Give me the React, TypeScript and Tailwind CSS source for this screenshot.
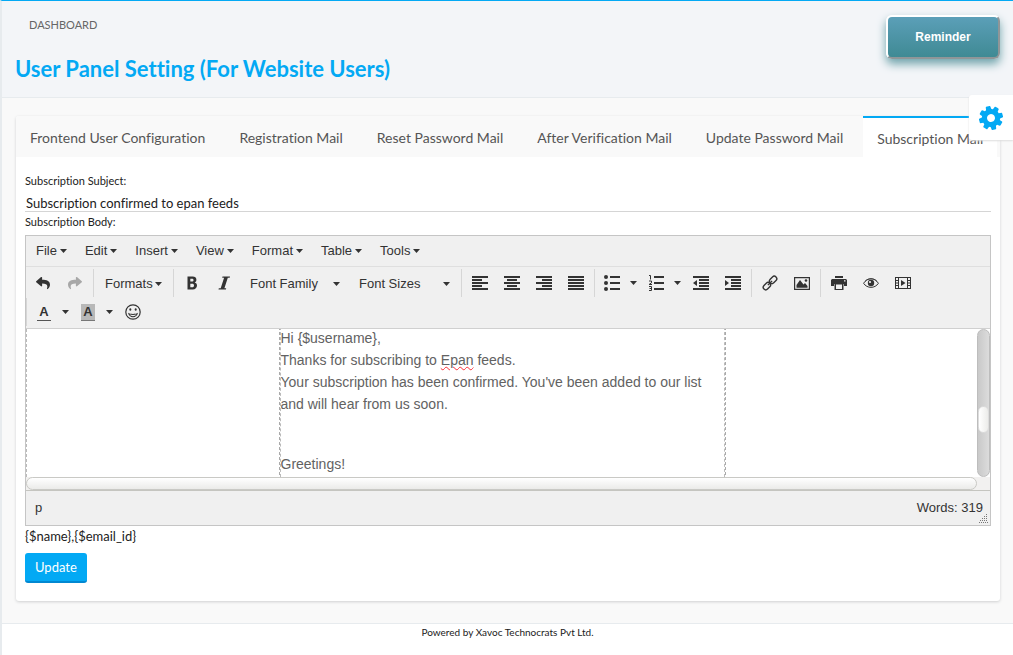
import type { ReactNode } from "react";
import { FaReply, FaShare } from "react-icons/fa";

const TABS = [
  "Frontend User Configuration",
  "Registration Mail",
  "Reset Password Mail",
  "After Verification Mail",
  "Update Password Mail",
  "Subscription Mail",
];

const MENUS = ["File", "Edit", "Insert", "View", "Format", "Table", "Tools"];

function Caret() {
  return (
    <svg viewBox="0 0 7 4" className="h-1 w-[7px] shrink-0 fill-[#333]" aria-hidden="true">
      <path d="M0 0h7L3.5 4z" />
    </svg>
  );
}

function Icon({ children }: { children: ReactNode }) {
  return (
    <svg viewBox="0 0 16 16" className="size-4 shrink-0 fill-[#333]" aria-hidden="true">
      {children}
    </svg>
  );
}

function Tool({ label, children }: { label: string; children: ReactNode }) {
  return (
    <button type="button" aria-label={label} className="flex h-7 w-8 items-center justify-center">
      {children}
    </button>
  );
}

function SplitTool({ label, children }: { label: string; children: ReactNode }) {
  return (
    <div className="flex h-7 w-11 items-center pl-[7px]">
      <button type="button" aria-label={label} className="flex h-7 w-4 items-center justify-center">
        {children}
      </button>
      <button type="button" aria-label={`${label} options`} className="flex h-7 w-5 items-center justify-end pr-[3px]">
        <Caret />
      </button>
    </div>
  );
}

function Group({ first, children }: { first?: boolean; children: ReactNode }) {
  return (
    <div className={first ? "flex pr-[2px] pl-px" : "flex border-l border-[#d6d6d6] pr-[2px] pl-[2px]"}>
      {children}
    </div>
  );
}

function Toolbar() {
  return (
    <div role="toolbar" aria-label="Formatting" className="flex flex-wrap gap-y-px border-b border-[#d0d0d0] py-[2px]">
      <Group first>
        <Tool label="Undo">
          <FaReply className="size-[14px] text-[#333]" />
        </Tool>
        <Tool label="Redo">
          <FaShare className="size-[14px] text-[#a7a7a7]" />
        </Tool>
      </Group>
      <Group>
        <button type="button" className="flex h-7 w-[75px] items-center justify-between px-[9px] pt-px">
          Formats <Caret />
        </button>
      </Group>
      <Group>
        <Tool label="Bold">
          <Icon>
            <path
              fillRule="evenodd"
              d="M3.500 1.500h5.200c2.200 0 3.700 1.200 3.700 3.200 0 1.300-.6 2.300-1.700 2.800 1.500.4 2.300 1.500 2.300 3.100 0 2.400-1.700 3.900-4.200 3.900H3.500zM6.300 3.700v2.900h1.600c1 0 1.600-.5 1.600-1.450S8.900 3.700 7.900 3.700zM6.300 8.700v3.500h1.900c1.200 0 1.800-.6 1.800-1.750S9.400 8.700 8.200 8.700z"
            />
          </Icon>
        </Tool>
        <Tool label="Italic">
          <Icon>
            <path d="M6.500 1.500H14l-.3 1.300h-1.900L8.400 13.200h1.800l-.3 1.300H2.500l.3-1.300h1.900L8.100 2.800H6.200z" />
          </Icon>
        </Tool>
        <button type="button" className="flex h-7 w-[109px] items-center justify-between pt-px pr-[9px] pl-[10px]">
          Font Family <Caret />
        </button>
        <button type="button" className="flex h-7 w-[110px] items-center justify-between pt-px pr-[9px] pl-[10px]">
          Font Sizes <Caret />
        </button>
      </Group>
      <Group>
        <Tool label="Align left">
          <Icon>
            <path d="M0 1h16v2H0zM0 4h10v2H0zM0 7h16v2H0zM0 10h10v2H0zM0 13h16v2H0z" />
          </Icon>
        </Tool>
        <Tool label="Align center">
          <Icon>
            <path d="M0 1h16v2H0zM3 4h10v2H3zM0 7h16v2H0zM3 10h10v2H3zM0 13h16v2H0z" />
          </Icon>
        </Tool>
        <Tool label="Align right">
          <Icon>
            <path d="M0 1h16v2H0zM6 4h10v2H6zM0 7h16v2H0zM6 10h10v2H6zM0 13h16v2H0z" />
          </Icon>
        </Tool>
        <Tool label="Justify">
          <Icon>
            <path d="M0 1h16v2H0zM0 4h16v2H0zM0 7h16v2H0zM0 10h16v2H0zM0 13h16v2H0z" />
          </Icon>
        </Tool>
      </Group>
      <Group>
        <SplitTool label="Bullet list">
          <Icon>
            <circle cx="2" cy="2" r="2" />
            <circle cx="2" cy="8" r="2" />
            <circle cx="2" cy="14" r="2" />
            <path d="M6 1h10v2H6zM6 7h10v2H6zM6 13h10v2H6z" />
          </Icon>
        </SplitTool>
        <SplitTool label="Numbered list">
          <Icon>
            <path d="M6 1h10v2H6zM6 7h10v2H6zM6 13h10v2H6z" />
            <path
              fill="none"
              stroke="#333"
              d="M1 .5h1.500V4.500M1 6h2.500v1.800L1 9.500h3M1 11.500h2.500v4H1M1.500 13.500h2"
            />
          </Icon>
        </SplitTool>
        <Tool label="Decrease indent">
          <Icon>
            <path d="M0 1h16v2H0zM6 4h10v2H6zM6 7h10v2H6zM6 10h10v2H6zM0 13h16v2H0zM4 5v6L0 8z" />
          </Icon>
        </Tool>
        <Tool label="Increase indent">
          <Icon>
            <path d="M0 1h16v2H0zM6 4h10v2H6zM6 7h10v2H6zM6 10h10v2H6zM0 13h16v2H0zM0 5v6l4-3z" />
          </Icon>
        </Tool>
      </Group>
      <Group>
        <Tool label="Insert link">
          <Icon>
            <g fill="none" stroke="#333" strokeWidth="1.400" transform="rotate(-45 8 8)">
              <rect x="-.5" y="5.500" width="8.200" height="5" rx="2.500" />
              <rect x="8.300" y="5.500" width="8.200" height="5" rx="2.500" />
              <path d="M5 8h6" />
            </g>
          </Icon>
        </Tool>
        <Tool label="Insert image">
          <Icon>
            <path fillRule="evenodd" d="M0 2h16v13H0zM1.200 3.200v10.600h13.600V3.200z" />
            <path d="M2.500 12.800V10l3.500-5 3.500 4.500 1.500-1.500 2.500 3v1.800z" />
            <circle cx="12" cy="5.500" r="1.300" />
          </Icon>
        </Tool>
      </Group>
      <Group>
        <Tool label="Print">
          <Icon>
            <path d="M4 1h8v2H4z" />
            <path fillRule="evenodd" d="M1 4h14l1 1v6h-3V9H3v2H0V5zM13 5.200v1.300h1.500V5.200z" />
            <path fillRule="evenodd" d="M3.500 8.500h9V15h-9zM5 9.500V14h6V9.500z" />
          </Icon>
        </Tool>
        <Tool label="Preview">
          <Icon>
            <path
              fill="none"
              stroke="#333"
              d="M.6 8.300C4 2.300 12 2.300 15.400 8.300 12 13.700 4 13.700.6 8.300z"
            />
            <path fill="none" stroke="#333" strokeWidth=".8" d="M2 6.500c3-3.700 9-3.700 12 0" />
            <circle cx="8" cy="8" r="3.200" />
            <circle cx="7" cy="7" r="1.100" fill="#f0f0f0" />
          </Icon>
        </Tool>
        <Tool label="Insert video">
          <Icon>
            <path
              fillRule="evenodd"
              d="M0 2h16v12H0zM1 3v2h2V3zM1 6v1.500h2V6zM1 8.500V10h2V8.500zM1 11v2h2v-2zM13 3v2h2V3zM13 6v1.500h2V6zM13 8.500V10h2V8.500zM13 11v2h2v-2zM4 3v10h8V3z"
            />
            <path d="M6 5v6l4.500-3z" />
          </Icon>
        </Tool>
      </Group>
      <Group>
        <SplitTool label="Text color">
          <span className="w-[14px] border-b border-[#555] text-center text-[13px] leading-4 font-bold">A</span>
        </SplitTool>
        <SplitTool label="Background color">
          <span className="w-[14px] border-b border-[#777] bg-[#b8b8b8] text-center text-[13px] leading-4 font-bold">
            A
          </span>
        </SplitTool>
        <Tool label="Emoticons">
          <Icon>
            <circle cx="8" cy="8" r="7.200" fill="none" stroke="#333" strokeWidth="1.200" />
            <ellipse cx="5.300" cy="5.500" rx="1" ry="1.300" />
            <ellipse cx="10.700" cy="5.500" rx="1" ry="1.300" />
            <path
              fillRule="evenodd"
              d="M3 8.700c2.500 1.600 7.500 1.600 10 0-.6 2.900-2.600 4.500-5 4.500s-4.400-1.600-5-4.500zM4.600 10.500c.8 1.100 2 1.700 3.400 1.700s2.600-.6 3.400-1.700c-2 .6-4.800.6-6.800 0z"
            />
          </Icon>
        </Tool>
      </Group>
    </div>
  );
}

function Editor() {
  return (
    <div className="border border-[#c5c5c5] bg-[#f0f0f0] font-['Liberation_Sans',sans-serif] text-[13px] text-[#333]">
      <div role="menubar" className="flex h-[31px] items-center border-b border-[#dfdfdf] pl-px">
        {MENUS.map((name) => (
          <button key={name} type="button" role="menuitem" className="flex h-7 items-center gap-[3px] px-[9px]">
            {name} <Caret />
          </button>
        ))}
      </div>
      <Toolbar />
      <div className="flex h-[148px] bg-white">
        <div className="flex-1 overflow-hidden border-l border-dashed border-[#bbb]">
          <div className="mx-auto h-full w-[447px] border-x border-dashed border-[#aaa]">
            <div
              contentEditable
              suppressContentEditableWarning
              role="textbox"
              aria-multiline="true"
              aria-labelledby="body-label"
              spellCheck={false}
              className="-mt-[2px] h-[150px] border-x border-dashed border-[#bbb] text-[14px] leading-[22px] text-[#626262] outline-none"
            >
              <p>Hi {"{$username}"},</p>
              <p>
                Thanks for subscribing to{" "}
                <span className="underline decoration-red-500 decoration-wavy decoration-1 underline-offset-1">
                  Epan
                </span>{" "}
                feeds.
              </p>
              <p>Your subscription has been confirmed. You've been added to our list and will hear from us soon.</p>
              <p className="mt-[38px]">Greetings!</p>
            </div>
          </div>
        </div>
        <div className="flex w-[13px] flex-col rounded-full border border-[#bdbdbd] bg-linear-to-r from-[#c9c9c9] to-[#dcdcdc] pt-[76px]">
          <div className="h-[27px] rounded-full border border-[#ddd] bg-linear-to-r from-white to-[#ececea]" />
        </div>
      </div>
      <div className="border-b border-[#c5c5c0] bg-[#f2f1f0] pr-[13px]">
        <div className="h-[13px] rounded-full border border-[#c9c9c5] bg-linear-to-b from-white to-[#ebebe9]" />
      </div>
      <div className="relative flex h-[34px] items-center justify-between pr-[7px] pl-[9px]">
        <span>p</span>
        <span>Words: 319</span>
        <svg viewBox="0 0 9 9" className="absolute right-[2px] bottom-[2px] size-[9px] fill-[#777]" aria-hidden="true">
          <path d="M7 0h1v1H7zM7 2h1v1H7zM5 2h1v1H5zM7 4h1v1H7zM5 4h1v1H5zM3 4h1v1H3zM7 6h1v1H7zM5 6h1v1H5zM3 6h1v1H3zM1 6h1v1H1zM0 8h1v1H0zM2 8h1v1H2zM4 8h1v1H4zM6 8h1v1H6zM8 8h1v1H8z" />
        </svg>
      </div>
    </div>
  );
}

export default function App() {
  return (
    <div className="relative flex min-h-screen flex-col overflow-x-hidden border-t border-l-2 border-t-[#03a9f4] border-l-[#e7ebee] bg-[#f9f9f9] font-['Lato',sans-serif] text-[#212121] [font-variant-ligatures:none]">
      <header className="flex justify-between border-b border-[#e7ebee] bg-[#f3f5f8] pr-[13px] pl-[13px]">
        <div>
          <nav aria-label="Breadcrumb" className="pt-[15px] pl-[14px] text-[11px] leading-[18px] text-[#666]">
            <a href="#dashboard">DASHBOARD</a>
          </nav>
          <h1 className="mt-[20px] mb-[13px] text-[22px] leading-[30px] font-bold text-[#03a9f4]">
            User Panel Setting (For Website Users)
          </h1>
        </div>
        <button
          type="button"
          className="mt-[14px] h-11 w-[114px] rounded-md border-2 border-t-white border-r-[#8f9698] border-b-[#8f9698] border-l-white bg-linear-to-b from-[#5b9fb8] to-[#3f8a94] font-['Liberation_Sans',sans-serif] text-[12px] font-bold text-white shadow-[0_5px_10px_#6fa3ab]"
        >
          Reminder
        </button>
      </header>

      <main className="flex-1 pt-[18px] pr-[13px] pb-[21px] pl-[14px]">
        <section className="rounded-[3px] bg-white shadow-[0_1px_3px_#cfd0d1]">
          <div role="tablist" className="flex gap-[6px] overflow-hidden rounded-t-[3px] bg-[#f9f9f9]">
            {TABS.map((tab) => {
              const active = tab === "Subscription Mail";
              return (
                <button
                  key={tab}
                  type="button"
                  role="tab"
                  aria-selected={active}
                  className={
                    active
                      ? "h-[41px] border-t-2 border-[#03a9f4] bg-white px-[14px] pt-px text-[14px] whitespace-nowrap text-[#555]"
                      : "h-[41px] px-[14px] pt-px text-[14px] whitespace-nowrap text-[#555]"
                  }
                >
                  {tab}
                </button>
              );
            })}
          </div>
          <form className="px-[9px] pt-[15px] pb-[18px]" onSubmit={(event) => event.preventDefault()}>
            <label htmlFor="subject" className="block text-[11px] leading-[18px]">
              Subscription Subject:
            </label>
            <input
              id="subject"
              type="text"
              defaultValue="Subscription confirmed to epan feeds"
              className="mt-[5px] block h-[17px] w-full border-b border-[#d5d5d5] bg-transparent pt-px pl-px text-[13px] outline-none"
            />
            <div id="body-label" className="pb-1 text-[11px] leading-[19px]">
              Subscription Body:
            </div>
            <Editor />
            <p className="text-[13px] leading-5">{"{$name},{$email_id}"}</p>
            <button
              type="submit"
              className="mt-[7px] block h-[30px] rounded-[3px] border-b-2 border-[#0288d1] bg-[#03a9f4] px-[10px] pt-px text-[13px] text-white"
            >
              Update
            </button>
          </form>
        </section>
      </main>

      <footer className="h-8 border-t border-[#e7ebee] bg-white text-center text-[10px] leading-4">
        Powered by Xavoc Technocrats Pvt Ltd.
      </footer>

      <button
        type="button"
        aria-label="Settings"
        className="absolute top-[94px] right-0 flex h-[45px] w-11 items-center justify-center rounded-l-[3px] bg-white shadow-[0_1px_2px_#ddd]"
      >
        <svg viewBox="0 0 1792 1792" className="size-7 -rotate-[15deg] fill-[#03a9f4]" aria-hidden="true">
          <path d="M1152 896q0-106-75-181t-181-75-181 75-75 181 75 181 181 75 181-75 75-181zm512-109v222q0 12-8 23t-20 13l-185 28q-19 54-39 91 35 50 107 138 10 12 10 25t-9 23q-27 37-99 108t-94 71q-12 0-26-9l-138-108q-44 23-91 38-16 136-29 186-7 28-36 28h-222q-14 0-24.5-8.5t-11.5-21.5l-28-184q-49-16-90-37l-141 107q-10 9-25 9-14 0-25-11-126-114-165-168-7-10-7-23 0-12 8-23 15-21 51-66.5t54-70.5q-27-50-41-99l-183-27q-13-2-21-12.5t-8-23.5v-222q0-12 8-23t19-13l186-28q14-46 39-92-40-57-107-138-10-12-10-24 0-10 9-23 26-36 98.5-107.5t94.5-71.5q13 0 26 10l138 107q44-23 91-38 16-136 29-186 7-28 36-28h222q14 0 24.5 8.5t11.5 21.5l28 184q49 16 90 37l142-107q9-9 24-9 13 0 25 10 129 119 165 170 7 8 7 22 0 12-8 23-15 21-51 66.5t-54 70.5q26 50 41 98l183 28q13 2 21 12.5t8 23.5z" />
        </svg>
      </button>
    </div>
  );
}
